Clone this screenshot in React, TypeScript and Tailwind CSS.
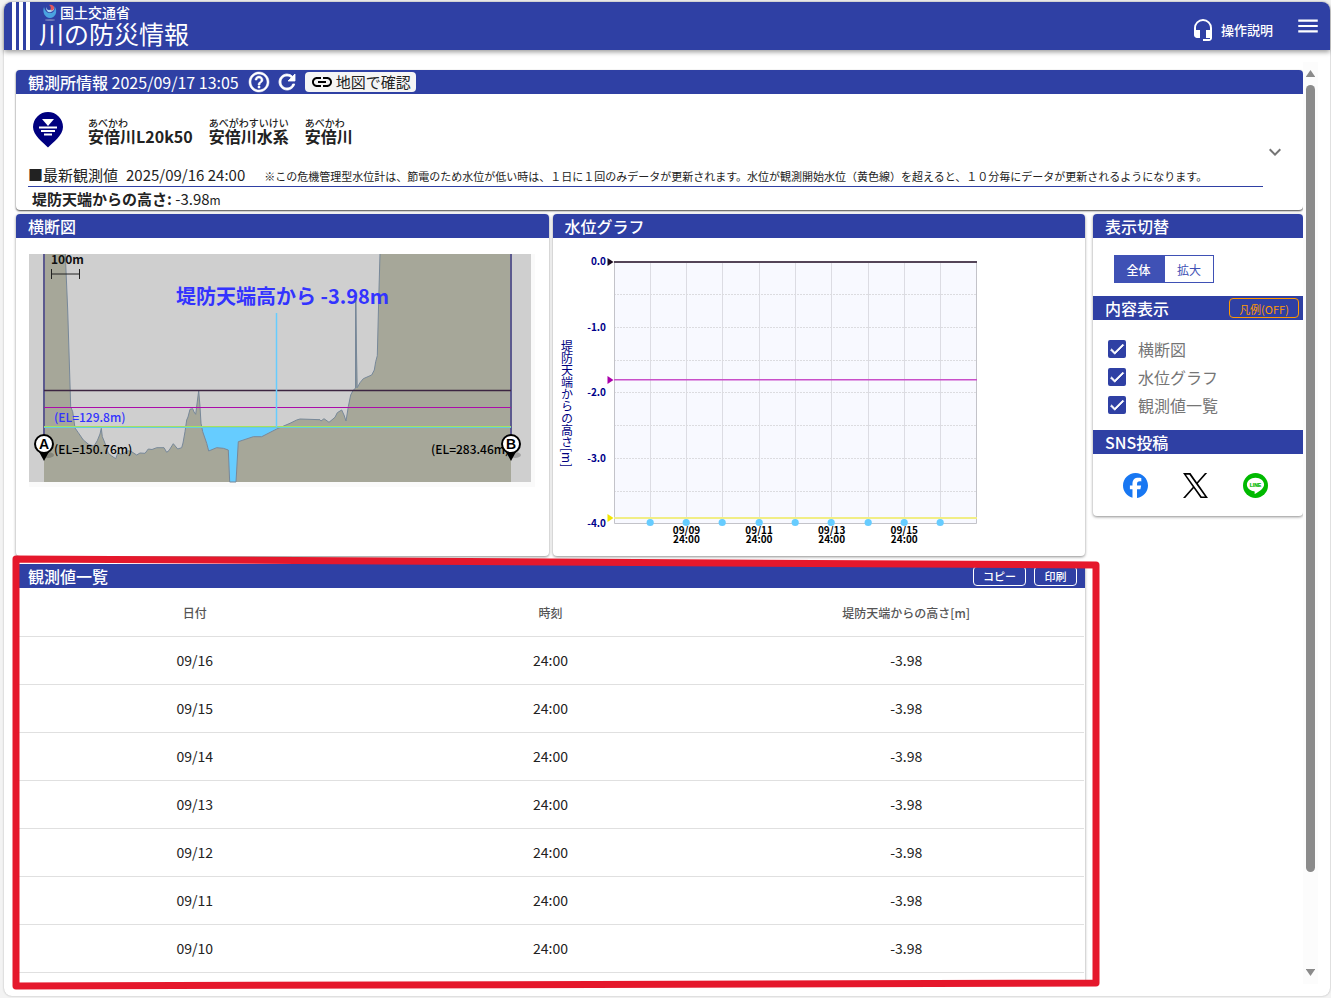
import React from "react";
import {
  MdCheck,
  MdExpandMore,
  MdHeadsetMic,
  MdHelpOutline,
  MdLink,
  MdMenu,
  MdRefresh,
} from "react-icons/md";
import { FaFacebook } from "react-icons/fa6";

const rows = ["09/16", "09/15", "09/14", "09/13", "09/12", "09/11", "09/10"].map((date) => ({
  date,
  time: "24:00",
  height: "-3.98",
}));

const names = [
  { ruby: "あべかわ", base: "安倍川L20k50" },
  { ruby: "あべがわすいけい", base: "安倍川水系" },
  { ruby: "あべかわ", base: "安倍川" },
];

const layers = ["横断図", "水位グラフ", "観測値一覧"];

const cardShadow = "shadow-[0_1px_3px_rgba(0,0,0,0.45)]";

function PanelHeader({
  title,
  rounded = false,
  children,
}: {
  title: string;
  rounded?: boolean;
  children?: React.ReactNode;
}) {
  return (
    <div
      className={`flex h-6 items-center justify-between bg-[#2f40a4] pl-3 text-white ${rounded ? "rounded-t" : ""}`}
    >
      <h2 className="text-base leading-6 font-medium">{title}</h2>
      {children}
    </div>
  );
}

function MinistryMark() {
  return (
    <svg width="16" height="17" viewBox="0 0 16 17" aria-hidden="true">
      <ellipse cx="8" cy="16" rx="5" ry="1" fill="#6b78b8" />
      <path d="M2 3C0 8 3 14 8 14s8-6 5-11c0 4-2 6-5 6S3 7 2 3Z" fill="#4aa3e0" />
      <path d="M4 3c0 4 2 6 5 5s4-3 3-6c-1 3-3 4-5 4S5 5 4 3Z" fill="#a9d4f2" />
      <path d="M7 1c3-1 5 1 5 3s-2 3-3 2 1-3-2-5Z" fill="#e4575f" />
    </svg>
  );
}

function StationPin() {
  return (
    <svg width="30" height="36" viewBox="0 0 30 36" aria-hidden="true">
      <path d="M15 35.500C10 30.500 0 23 0 15a15 15 0 0 1 30 0c0 8-10 15.500-15 20.500Z" fill="#00007f" />
      <path d="M9 7h12L15 14Z" fill="#fff" />
      <path d="M6 15.500h18M8 19h14M11 22.500h8" stroke="#fff" strokeWidth="1.800" />
    </svg>
  );
}

function XLogo() {
  return (
    <svg width="25" height="25" viewBox="0 0 300 300.251" aria-hidden="true">
      <path d="M178.570 127.150L290.270 0h-26.460l-97.030 110.380L89.340 0H0l117.130 166.930L0 300.250h26.460l102.400-116.590l81.800 116.590H300M36.010 19.540h40.650l187.130 262.130h-40.660" />
    </svg>
  );
}

function LineLogo() {
  return (
    <svg width="25" height="25" viewBox="0 0 25 25" aria-hidden="true">
      <circle cx="12.500" cy="12.500" r="12.500" fill="#00b900" />
      <path
        d="M12.500 4.700c-4.800 0-8.600 3-8.600 6.800 0 3.400 3 6.200 7.200 6.700.9.200.6 1 .5 2.300 0 .4.300.5.700.300 3.400-1.900 8.800-5.400 8.800-9.300 0-3.800-3.800-6.800-8.600-6.800Z"
        fill="#fff"
      />
      <text
        x="12.500"
        y="13.500"
        textAnchor="middle"
        fontSize="5"
        fontWeight="700"
        fill="#00b900"
        stroke="#00b900"
        strokeWidth="0.200"
        fontFamily="Liberation Sans, sans-serif"
      >
        LINE
      </text>
    </svg>
  );
}

function Marker({ x, y, label }: { x: number; y: number; label: string }) {
  return (
    <g>
      <ellipse cx={x + 4} cy={y + 11} rx="6" ry="3" fill="#000" opacity="0.2" />
      <path d={`M${x - 6} ${y + 6}L${x} ${y + 17}L${x + 6} ${y + 6}Z`} fill="#000" />
      <circle cx={x} cy={y} r="9" fill="#fff" stroke="#000" strokeWidth="2" />
      <text
        x={x}
        y={y + 5}
        textAnchor="middle"
        fontSize="14"
        fontWeight="700"
        fontFamily="Liberation Sans, sans-serif"
      >
        {label}
      </text>
    </g>
  );
}

const ground =
  "M44 482V254H65.300L67.700 310L70.700 406.700L72.700 411.700L75 428L78.300 432.700L83.300 440L89 444.700L94 446L97.300 440.700L100 434L101.300 428.300L102.300 436.700L105 443.300L108.300 453.300L111.700 456L115.700 458.700L117.700 453.300L121.700 454.300L128.300 450.700L131 451.300L136.700 455L140 453L145 453.300L148.300 449L152 449.500L156.700 447.700H164L166.700 452.300L169 450.500L173.300 443.700L177.700 449L181.700 447.700L183 443L185 431.700L186.700 420L188 417L190 409.300L192.700 408.700L194 412L195.700 414.300L198.700 390.700L200 406.700L201 423.300L202.700 431.700L206.700 443.300L208.700 451L216.700 447.700L223.300 448.300L228.300 450L229.700 482H236L238.300 441.700L253.300 436.700H261.700L276.700 429L290 423.300L296.700 420L300 419L320 419.700L321 421L324 418.700L329 422.300L335 417.300L337.300 412.700L341.700 410L344 415L346 421L348.300 406.700L350.700 395L353.300 390L355.500 388.300V300L357.200 387.700L360 382.700L363.300 378.700L371.700 375L374.300 370L375.700 361.700L377.300 355.700L378.700 300L380 254H511V482Z";

function CrossSection() {
  return (
    <svg
      width="502"
      height="228"
      viewBox="29 254 502 228"
      role="img"
      aria-label="横断図"
      className="max-w-full overflow-visible"
    >
      <rect x="29" y="254" width="502" height="228" fill="#cfcfcf" />
      <path
        d="M201.500 427H280L261.700 436.700H253.300L238.300 441.700L236 482H229.700L228.300 450L223.300 448.300L216.700 447.700L208.700 451L206.700 443.300L202.700 431.700Z"
        fill="#66ccff"
      />
      <path d={ground} fill="#a6a799" />
      <path
        d={ground.replace("M44 482V254H65.300", "M65.300 254").replace("L380 254H511V482Z", "L380 254")}
        fill="none"
        stroke="#778899"
        strokeWidth="1"
      />
      <path d="M355.800 300V388" stroke="#778899" strokeWidth="1.500" />
      <path d="M44 254V440M511 254V440" stroke="#5c5a8e" strokeWidth="2" />
      <path d="M44 390.500H511" stroke="#3c2541" strokeWidth="1.300" />
      <path d="M44 407.500H511" stroke="#aa0caa" strokeWidth="1.200" />
      <path d="M44 426.500H511" stroke="#a6e060" strokeWidth="1" />
      <path d="M44 427.500H511" stroke="#66ccdd" strokeWidth="1" />
      <path d="M276.500 313V427" stroke="#66ccff" strokeWidth="1.500" />
      <path d="M51.500 269V279M79.500 269V279M51.500 274H79.500" stroke="#222" strokeWidth="1" fill="none" />
      <text x="51" y="264" fontSize="12" fontWeight="700" fill="#111">
        100m
      </text>
      <text x="176" y="304" fontSize="20" fontWeight="700" fill="#3333ff">
        堤防天端高から -3.98m
      </text>
      <g fontSize="12" fontWeight="500">
        <text x="54" y="422" fill="#3333ff">
          (EL=129.8m)
        </text>
        <text x="54" y="454" fill="#000">
          (EL=150.76m)
        </text>
        <text x="431" y="454" fill="#000">
          (EL=283.46m)
        </text>
      </g>
      <Marker x={44} y={444} label="A" />
      <Marker x={511} y={444} label="B" />
    </svg>
  );
}

function LevelChart() {
  const xs = [650.5, 686.5, 722.5, 759.5, 795.5, 831.5, 868.5, 904.5, 940.5];
  const ys = [294.5, 327.5, 360.5, 392.5, 425.5, 458.5, 491.5];
  const labels = ["0.0", "-1.0", "-2.0", "-3.0", "-4.0"];
  const dates = ["09/09", "09/11", "09/13", "09/15"];
  return (
    <svg
      width="400"
      height="300"
      viewBox="582 252 400 300"
      role="img"
      aria-label="水位グラフ"
      className="max-w-full"
    >
      <rect x="614" y="262" width="363" height="262" fill="#f8f9ff" />
      {xs.map((x) => (
        <path key={x} d={`M${x} 262V524`} stroke="#dcdce3" />
      ))}
      {ys.map((y) => (
        <path key={y} d={`M614 ${y}H977`} stroke="#dcdce0" strokeDasharray="2 1" />
      ))}
      <path d="M614.500 262V523.500H976.500V262" fill="none" stroke="#c3c3c9" />
      <path d="M614 262H977" stroke="#544558" strokeWidth="2" />
      <path d="M614 379.800H977" stroke="#c94fc9" strokeWidth="1.600" />
      <path d="M614 518H977" stroke="#f1ee86" strokeWidth="2" />
      <path d="M607.500 258V266L613.500 262Z" fill="#1a0a1e" />
      <path d="M607.500 376V384L613.500 380Z" fill="#aa00aa" />
      <path d="M607.500 514V522L613.500 518Z" fill="#f2e600" />
      {xs.map((x) => (
        <circle key={x} cx={x - 0.3} cy="522.500" r="3.600" fill="#66ccff" />
      ))}
      <g fontSize="10" fontWeight="700" fill="#00008b" textAnchor="end">
        {labels.map((t, i) => (
          <text key={t} x="606" y={265 + i * 65.5}>
            {t}
          </text>
        ))}
      </g>
      <g fontSize="10" fontWeight="700" fill="#000" textAnchor="middle">
        {dates.map((t, i) => (
          <React.Fragment key={t}>
            <text x={686.5 + i * 72.6} y="534">
              {t}
            </text>
            <text x={686.5 + i * 72.6} y="543">
              24:00
            </text>
          </React.Fragment>
        ))}
      </g>
    </svg>
  );
}

function Checkbox({ label }: { label: string }) {
  const id = `layer-${label}`;
  return (
    <div className="flex h-7 items-center">
      <span className="grid size-[18px] place-items-center">
        <input
          id={id}
          type="checkbox"
          defaultChecked
          className="peer col-start-1 row-start-1 size-[18px] appearance-none rounded-xs border-2 border-[#2f40a4] checked:bg-[#2f40a4]"
        />
        <MdCheck className="pointer-events-none invisible col-start-1 row-start-1 size-[18px] stroke-white stroke-1 text-white peer-checked:visible [&>[fill=none]]:stroke-none" />
      </span>
      <label htmlFor={id} className="pl-3 text-base leading-7 text-[#757575]">
        {label}
      </label>
    </div>
  );
}

function ScrollRail() {
  return (
    <div className="flex w-[15px] shrink-0 flex-col items-center bg-[#fcfcfc] py-2" aria-hidden="true">
      <svg width="9" height="7" viewBox="0 0 9 7">
        <path d="M4.500 0L9 6.500V7H0V6.500Z" fill="#8b8b8b" />
      </svg>
      <div className="flex w-[9px] flex-1 flex-col pt-2">
        <div className="h-[89%] rounded-full bg-[#8b8b8b]" />
      </div>
      <svg width="9" height="7" viewBox="0 0 9 7">
        <path d="M4.500 7L9 .500V0H0V.500Z" fill="#8b8b8b" />
      </svg>
    </div>
  );
}

function Header() {
  return (
    <header className="flex h-12 shrink-0 items-center justify-between rounded-t-lg bg-[#2f40a4] pr-[9px] pl-2 text-white shadow-[0_2px_5px_rgba(0,0,0,0.4)]">
      <div className="flex h-full">
        <div className="flex gap-[3px]">
          <span className="w-1 bg-white" />
          <span className="w-1 bg-white" />
          <span className="w-1 bg-white" />
        </div>
        <a href="#top" className="block pl-[9px]">
          <span className="flex h-5 items-center gap-[2px] pl-[3px] text-sm leading-5 font-medium">
            <MinistryMark />
            国土交通省
          </span>
          <span className="block text-[25px] leading-[22px]">川の防災情報</span>
        </a>
      </div>
      <div className="flex items-center gap-[22px]">
        <a href="#help" className="flex items-center gap-[6px] pt-2 text-[13px] leading-5 font-medium">
          <MdHeadsetMic className="size-6" />
          操作説明
        </a>
        <button type="button" aria-label="メニュー">
          <MdMenu className="size-[26px]" />
        </button>
      </div>
    </header>
  );
}

function StationCard() {
  return (
    <section className="rounded bg-white shadow-[0_1px_2px_rgba(0,0,0,0.75)]">
      <div className="flex h-6 items-center rounded-t bg-[#2f40a4] pl-3 text-white">
        <h1 className="text-base leading-6 font-medium">
          観測所情報 <span className="font-normal">2025/09/17 13:05</span>
        </h1>
        <button type="button" aria-label="ヘルプ" className="ml-2">
          <MdHelpOutline className="size-6 stroke-white stroke-[0.5] [&>[fill=none]]:stroke-none" />
        </button>
        <button type="button" aria-label="更新" className="ml-1">
          <MdRefresh className="size-6 stroke-white stroke-[0.8] [&>[fill=none]]:stroke-none" />
        </button>
        <button
          type="button"
          className="ml-[6px] flex h-5 items-center gap-[2px] rounded bg-[#f5f5f5] px-[5px] text-[15px] leading-5 text-[#222]"
        >
          <MdLink className="size-6 text-black" />
          地図で確認
        </button>
      </div>
      <div className="flex items-center pr-4 pl-3">
        <div className="min-w-0 flex-1">
          <div className="flex h-[70px] items-start pt-[18px] pl-[5px]">
            <StationPin />
            <div className="flex gap-4 pt-[5px] pl-[25px]">
              {names.map((n) => (
                <div key={n.base} className="flex flex-col">
                  <span className="text-[10px] leading-3 font-medium">{n.ruby}</span>
                  <span className="text-base leading-[14px] font-bold">{n.base}</span>
                </div>
              ))}
            </div>
          </div>
          <div className="flex h-[23px] items-center border-b border-[#2f40a4] text-[15px] leading-[22px] whitespace-nowrap">
            <span>■最新観測値</span>
            <span className="pl-2">2025/09/16 24:00</span>
            <span className="pt-[2px] pl-[19px] text-[11px]">
              ※この危機管理型水位計は、節電のため水位が低い時は、１日に１回のみデータが更新されます。水位が観測開始水位（黄色線）を超えると、１０分毎にデータが更新されるようになります。
            </span>
          </div>
          <p className="h-[23px] pt-px pl-1 text-[15px] leading-[22px]">
            <b className="font-bold">堤防天端からの高さ:</b> -3.98<span className="text-xs">m</span>
          </p>
        </div>
        <button type="button" aria-label="詳細を開く" className="shrink-0 text-[#757575]">
          <MdExpandMore className="size-6" />
        </button>
      </div>
    </section>
  );
}

function SidePanel() {
  return (
    <aside className={`self-start rounded bg-white ${cardShadow}`}>
      <PanelHeader title="表示切替" rounded />
      <div className="flex px-[21px] pt-[17px] pb-[13px] text-xs">
        <button
          type="button"
          className="h-7 w-[51px] border border-[#3f51b5] bg-[#3f51b5] pt-[2px] pr-[2px] font-medium text-white"
        >
          全体
        </button>
        <button
          type="button"
          className="h-7 w-[49px] border border-l-0 border-[#3f51b5] bg-white pt-[2px] text-[#3f51b5]"
        >
          拡大
        </button>
      </div>
      <PanelHeader title="内容表示">
        <button
          type="button"
          className="mr-1 h-5 w-[70px] rounded border border-[#ff9800] pt-px text-[11px] leading-4 text-[#ff9800]"
        >
          凡例(OFF)
        </button>
      </PanelHeader>
      <div className="flex flex-col pt-[15px] pb-[11px] pl-[15px]">
        {layers.map((l) => (
          <Checkbox key={l} label={l} />
        ))}
      </div>
      <PanelHeader title="SNS投稿" />
      <div className="flex h-[62px] items-center gap-[35px] pl-[30px]">
        <a href="#facebook" aria-label="Facebook" className="block text-[#1877f2]">
          <FaFacebook className="size-[25px]" />
        </a>
        <a href="#x" aria-label="X" className="block text-black">
          <XLogo />
        </a>
        <a href="#line" aria-label="LINE" className="block">
          <LineLogo />
        </a>
      </div>
    </aside>
  );
}

function HighlightFrame() {
  return (
    <svg
      className="pointer-events-none absolute -top-[5px] left-0 h-[calc(100%+7px)] w-[calc(100%+11px)] overflow-visible"
      viewBox="0 0 1000 1000"
      preserveAspectRatio="none"
      aria-hidden="true"
    >
      <path
        d="M0 0L1000 14L1000 993L0 1000Z"
        fill="none"
        stroke="#e5182c"
        strokeWidth="7"
        strokeLinejoin="round"
        vectorEffect="non-scaling-stroke"
      />
    </svg>
  );
}

function ValuesPanel() {
  const outline = "h-5 rounded border border-white text-[11px] leading-4 font-medium text-white";
  return (
    <div className="relative min-h-0 flex-1">
      <div className="h-full overflow-x-visible overflow-y-clip">
        <section className={`min-h-full rounded bg-white ${cardShadow}`}>
          <PanelHeader title="観測値一覧" rounded>
            <div className="flex gap-2 pr-2">
              <button type="button" className={`${outline} w-[53px]`}>
                コピー
              </button>
              <button type="button" className={`${outline} w-[43px]`}>
                印刷
              </button>
            </div>
          </PanelHeader>
          <div className="px-px">
            <table className="w-full table-fixed border-collapse text-center">
              <thead>
                <tr className="h-12 border-b border-[#e0e0e0] text-xs text-[#555]">
                  <th className="pt-[3px] font-medium">日付</th>
                  <th className="pt-[3px] font-medium">時刻</th>
                  <th className="pt-[3px] font-medium">堤防天端からの高さ[m]</th>
                </tr>
              </thead>
              <tbody>
                {rows.map((r) => (
                  <tr key={r.date} className="h-12 border-b border-[#e0e0e0] text-sm">
                    <td>{r.date}</td>
                    <td>{r.time}</td>
                    <td>{r.height}</td>
                  </tr>
                ))}
              </tbody>
            </table>
          </div>
        </section>
      </div>
      <HighlightFrame />
    </div>
  );
}

export default function App() {
  return (
    <div className="h-screen bg-[#f3f3f3] pt-[2px] pr-px pb-[2px] pl-1 font-['Noto_Sans_CJK_JP',sans-serif] text-[#222]">
      <div className="flex h-full flex-col rounded-lg bg-white shadow-[0_0_2px_rgba(0,0,0,0.3)]">
        <Header />
        <div className="flex min-h-0 flex-1 p-3">
          <main className="flex min-w-0 flex-1 flex-col gap-1 pt-2">
            <StationCard />
            <div className="grid min-h-0 flex-1 grid-cols-[minmax(0,1fr)_210px] gap-2">
              <div className="flex min-h-0 flex-col gap-2">
                <div className="grid shrink-0 grid-cols-2 gap-1">
                  <section className={`rounded bg-white ${cardShadow}`}>
                    <PanelHeader title="横断図" rounded />
                    <div className="pt-4 pl-[13px]">
                      <div className="w-fit bg-[#fafafa] pr-1 pb-[5px]">
                        <CrossSection />
                      </div>
                    </div>
                  </section>
                  <section className={`rounded bg-white ${cardShadow}`}>
                    <PanelHeader title="水位グラフ" rounded />
                    <div className="flex h-[318px] pt-[14px] pl-[5px]">
                      <span className="w-6 pt-[88px] text-xs leading-[18px] text-[#00007f] [writing-mode:vertical-lr]">
                        堤防天端からの高さ[m]
                      </span>
                      <LevelChart />
                    </div>
                  </section>
                </div>
                <ValuesPanel />
              </div>
              <SidePanel />
            </div>
          </main>
          <ScrollRail />
        </div>
      </div>
    </div>
  );
}
